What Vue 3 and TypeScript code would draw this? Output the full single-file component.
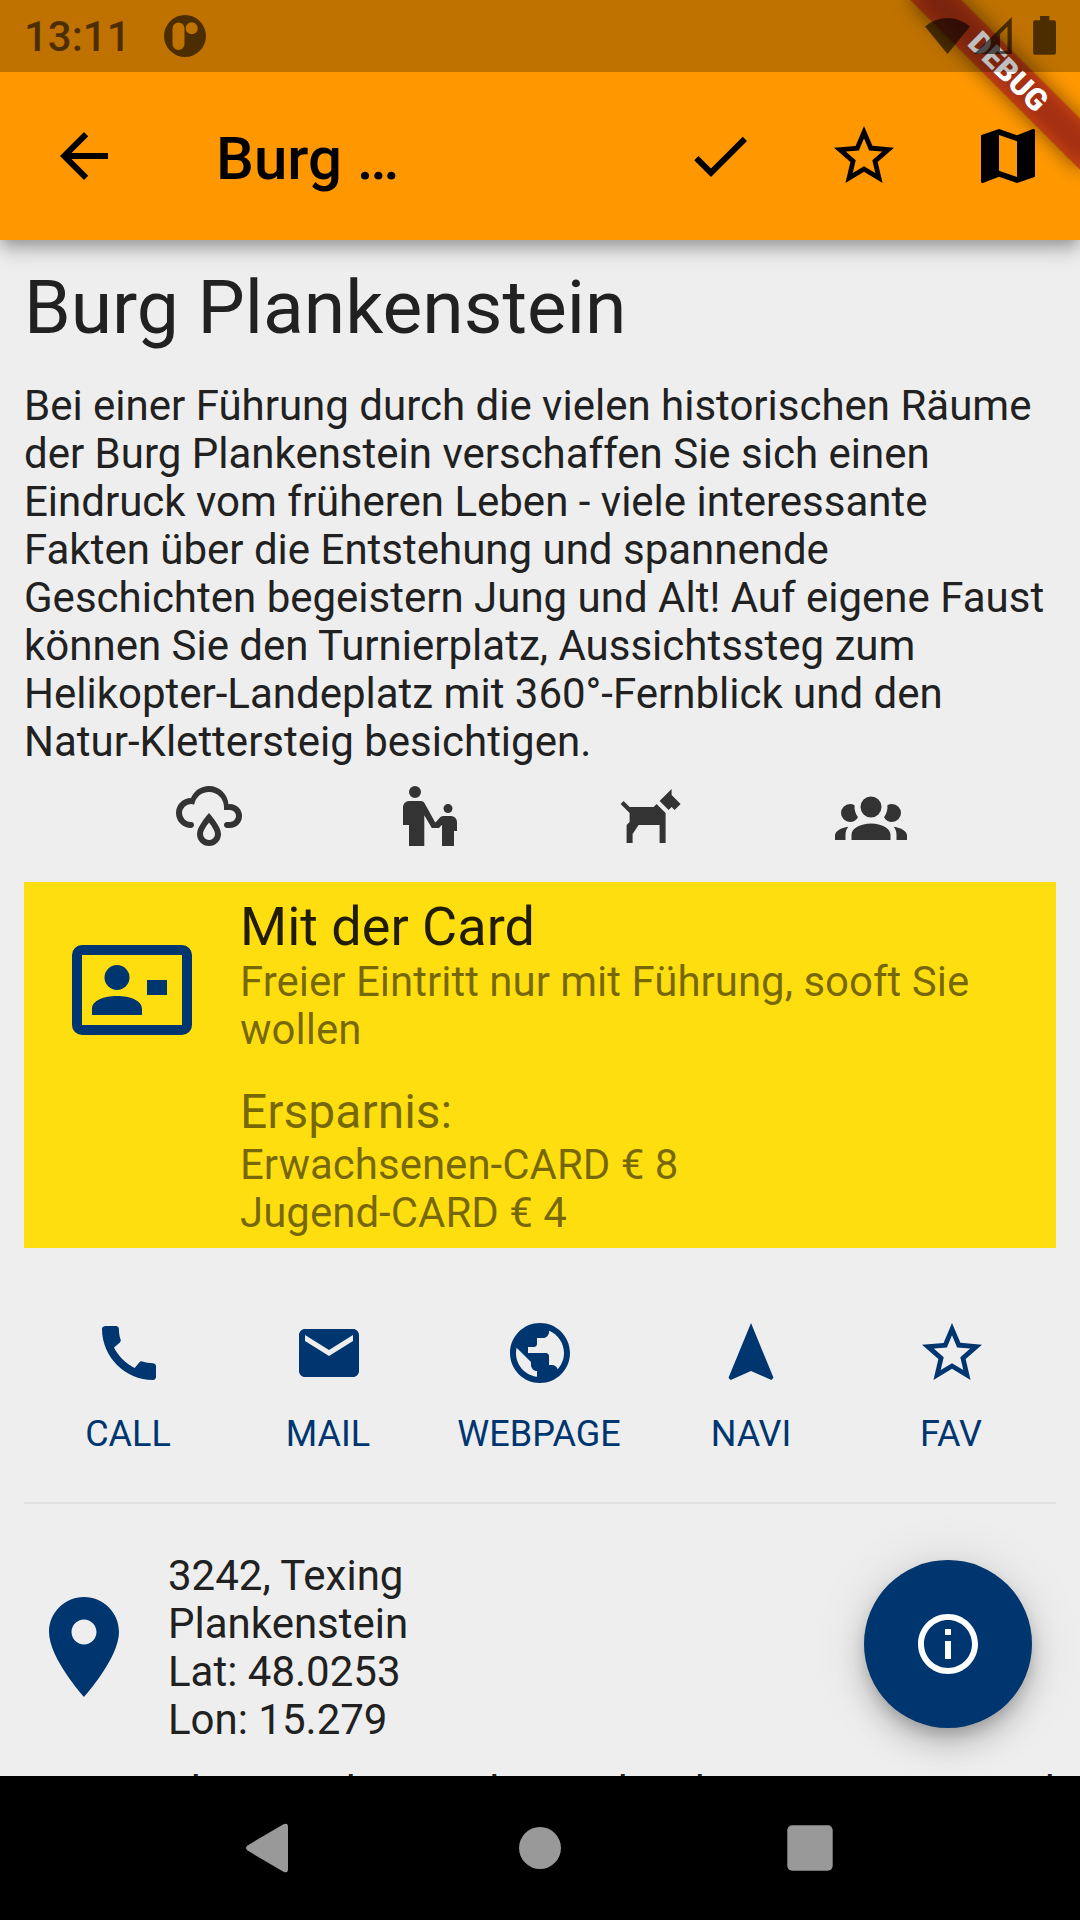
<script setup lang="ts">
interface Action {
  label: string
  path: string
  wide?: boolean
}

const starOutline =
  'M22 9.24l-7.19-.62L12 2 9.19 8.63 2 9.24l5.46 4.73L5.82 21 12 17.27 18.18 21l-1.63-7.03L22 9.24zM12 15.4l-3.76 2.27 1-4.28-3.32-2.88 4.38-.38L12 6.1l1.71 4.04 4.38.38-3.32 2.88 1 4.28L12 15.4z'

const toolbarIcons: string[] = [
  'M9 16.17L4.83 12l-1.42 1.41L9 19 21 7l-1.41-1.41z',
  starOutline,
  'M20.5 3l-.16.03L15 5.1 9 3 3.36 4.9c-.21.07-.36.25-.36.48V20.5c0 .28.22.5.5.5l.16-.03L9 18.9l6 2.1 5.64-1.9c.21-.07.36-.25.36-.48V3.5c0-.28-.22-.5-.5-.5zM15 19l-6-2.11V5l6 2.11V19z',
]

const description: string[] = [
  'Bei einer Führung durch die vielen historischen Räume',
  'der Burg Plankenstein verschaffen Sie sich einen',
  'Eindruck vom früheren Leben - viele interessante',
  'Fakten über die Entstehung und spannende',
  'Geschichten begeistern Jung und Alt! Auf eigene Faust',
  'können Sie den Turnierplatz, Aussichtssteg zum',
  'Helikopter-Landeplatz mit 360°-Fernblick und den',
  'Natur-Klettersteig besichtigen.',
]

const features: string[] = [
  // rain
  'M6,14.03A1,1 0 0,1 7,15.03C7,15.58 6.55,16.03 6,16.03C3.24,16.03 1,13.79 1,11.03C1,8.27 3.24,6.03 6,6.03C7,3.68 9.3,2.03 12,2.03C15.43,2.03 18.24,4.69 18.5,8.06L19,8.03A4,4 0 0,1 23,12.03C23,14.23 21.21,16.03 19,16.03H18C17.45,16.03 17,15.58 17,15.03C17,14.47 17.45,14.03 18,14.03H19A2,2 0 0,0 21,12.03A2,2 0 0,0 19,10.03H17V9.03C17,6.27 14.76,4.03 12,4.03C9.5,4.03 7.45,5.84 7.06,8.21C6.73,8.09 6.37,8.03 6,8.03A3,3 0 0,0 3,11.03A3,3 0 0,0 6,14.03M12,14.15C12.18,14.39 12.37,14.66 12.56,14.94C13,15.56 14,17.03 14,18C14,19.11 13.1,20 12,20A2,2 0 0,1 10,18C10,17.03 11,15.56 11.44,14.94C11.63,14.66 11.82,14.4 12,14.15M12,11.03L11.5,11.59C11.5,11.59 10.65,12.55 9.79,13.81C8.93,15.06 8,16.56 8,18A4,4 0 0,0 12,22A4,4 0 0,0 16,18C16,16.56 15.07,15.06 14.21,13.81C13.35,12.55 12.5,11.59 12.5,11.59Z',
  // parent with child
  'M7,2A2,2 0 0,1 9,4A2,2 0 0,1 7,6A2,2 0 0,1 5,4A2,2 0 0,1 7,2M18,8A1.5,1.5 0 0,1 19.5,9.5A1.5,1.5 0 0,1 18,11A1.5,1.5 0 0,1 16.5,9.5A1.5,1.5 0 0,1 18,8M5,7H9C9.5,7 9.9,7.25 10.15,7.65L13.7,14.05H13.9L15.1,12.75C15.5,12.3 16,12 16.5,12H19A2,2 0 0,1 21,14V17H20V22H16V14.9L15,16H12.6L10.1,11.75V22H5V15H3V9A2,2 0 0,1 5,7Z',
  // dog
  'M19.2,3L15.2,7L18.2,10L19.2,9L20.2,10L22.2,8L19.2,5ZM3.2,7L5.2,9H13.2L14.2,8L17.2,11V21H15.2V15H8.2L6.2,18V21H4.2V15L5.2,14V11L2.2,8Z',
  // group
  'M12,5.5A3.5,3.5 0 0,1 15.5,9A3.5,3.5 0 0,1 12,12.5A3.5,3.5 0 0,1 8.5,9A3.5,3.5 0 0,1 12,5.5M5,8C5.56,8 6.08,8.15 6.53,8.42C6.38,9.85 6.8,11.27 7.66,12.38C7.16,13.34 6.16,14 5,14A3,3 0 0,1 2,11A3,3 0 0,1 5,8M19,8A3,3 0 0,1 22,11A3,3 0 0,1 19,14C17.84,14 16.84,13.34 16.34,12.38C17.2,11.27 17.62,9.85 17.47,8.42C17.92,8.15 18.44,8 19,8M5.5,18.25C5.5,16.18 8.41,14.5 12,14.5C15.59,14.5 18.5,16.18 18.5,18.25V20H5.5V18.25M0,20V18.5C0,17.11 1.89,15.94 4.45,15.6C3.86,16.28 3.5,17.22 3.5,18.25V20H0M24,20H20.5V18.25C20.5,17.22 20.14,16.28 19.55,15.6C22.11,15.94 24,17.11 24,18.5V20Z',
]

const actions: Action[] = [
  {
    label: 'CALL',
    path: 'M20.01 15.38c-1.23 0-2.42-.2-3.53-.56-.35-.12-.74-.03-1.01.24l-1.57 1.97c-2.83-1.35-5.48-3.9-6.89-6.83l1.95-1.66c.27-.28.35-.67.24-1.02-.37-1.11-.56-2.3-.56-3.53 0-.54-.45-.99-.99-.99H4.19C3.65 3 3 3.24 3 3.99 3 13.28 10.73 21 20.01 21c.71 0 .99-.63.99-1.18v-3.45c0-.54-.45-.99-.99-.99z',
  },
  {
    label: 'MAIL',
    path: 'M20 4H4c-1.1 0-1.99.9-1.99 2L2 18c0 1.1.9 2 2 2h16c1.1 0 2-.9 2-2V6c0-1.1-.9-2-2-2zm0 4l-8 5-8-5V6l8 5 8-5v2z',
  },
  {
    label: 'WEBPAGE',
    wide: true,
    path: 'M12 2C6.48 2 2 6.48 2 12s4.48 10 10 10 10-4.48 10-10S17.52 2 12 2zm-1 17.93c-3.95-.49-7-3.85-7-7.93 0-.62.08-1.21.21-1.79L9 15v1c0 1.1.9 2 2 2v1.93zm6.9-2.54c-.26-.81-1-1.39-1.9-1.39h-1v-3c0-.55-.45-1-1-1H8v-2h2c.55 0 1-.45 1-1V7h2c1.1 0 2-.9 2-2v-.41c2.93 1.19 5 4.06 5 7.41 0 2.08-.8 3.97-2.1 5.39z',
  },
  { label: 'NAVI', path: 'M12 2L4.5 20.29l.71.71L12 18l6.79 3 .71-.71z' },
  { label: 'FAV', path: starOutline },
]

const address: string[] = ['3242, Texing', 'Plankenstein', 'Lat: 48.0253', 'Lon: 15.279']
</script>

<template>
  <div class="screen">
    <div class="status">
      <span class="clock">13:11</span>
      <svg class="notif" width="42" height="42" viewBox="0 0 42 42">
        <path
          fill-rule="evenodd"
          d="M21 0a21 21 0 1 1 0 42a21 21 0 1 1 0-42zM14.500 7.500a6 6 0 0 0-6 6v15.500a6 6 0 0 0 12 0v-15.500a6 6 0 0 0-6-6zM27.700 7.300a6 6 0 1 0 0 12a6 6 0 1 0 0-12z"
        />
      </svg>
      <svg class="signals" width="132" height="42" viewBox="924 15 132 42">
        <path d="M925 26.500a34 34 0 0 1 45 0L947.500 54z" />
        <path fill-rule="evenodd" d="M974 54L1011.800 17V54zM1000 51H1007.500V26.500L1000 34z" />
        <path d="M1040 16h9.400v4.300h4.400a2.200 2.200 0 0 1 2.200 2.200v30a2.200 2.200 0 0 1-2.200 2.200h-18.500a2.200 2.200 0 0 1-2.200-2.200v-30a2.200 2.200 0 0 1 2.200-2.200h4.700z" />
      </svg>
    </div>

    <div class="ribbon"><span>DEBUG</span></div>

    <header class="appbar">
      <svg class="ic" viewBox="0 0 24 24">
        <path d="M20 11H7.830l5.590-5.590L12 4l-8 8 8 8 1.410-1.410L7.830 13H20v-2z" />
      </svg>
      <h1>Burg …</h1>
      <div class="tools">
        <svg v-for="(p, i) in toolbarIcons" :key="i" class="ic" viewBox="0 0 24 24"><path :d="p" /></svg>
      </div>
    </header>

    <main class="content">
      <h2>Burg Plankenstein</h2>
      <p class="desc"><span v-for="line in description" :key="line">{{ line }}</span></p>

      <div class="features">
        <svg v-for="(p, i) in features" :key="i" class="ic" viewBox="0 0 24 24"><path :d="p" /></svg>
      </div>

      <section class="card">
        <svg class="big" viewBox="0 0 24 24">
          <path
            fill-rule="evenodd"
            d="M2 3H22A2 2 0 0 1 24 5V19A2 2 0 0 1 22 21H2A2 2 0 0 1 0 19V5A2 2 0 0 1 2 3ZM2 5V19H22V5Z"
          />
          <circle cx="9" cy="9.500" r="2.500" />
          <path d="M14 17H4V15.750C4 14.100 6.400 13.200 9 13.200S14 14.100 14 15.750ZM15 10H19V13H15Z" />
        </svg>
        <div class="card-text">
          <h3>Mit der Card</h3>
          <p>Freier Eintritt nur mit Führung, sooft Sie<br />wollen</p>
          <h4>Ersparnis:</h4>
          <p>Erwachsenen-CARD € 8<br />Jugend-CARD € 4</p>
        </div>
      </section>

      <nav class="actions">
        <div v-for="a in actions" :key="a.label" class="action" :class="{ wide: a.wide }">
          <svg class="ic" viewBox="0 0 24 24"><path :d="a.path" /></svg>
          <span>{{ a.label }}</span>
        </div>
      </nav>

      <hr />

      <div class="place">
        <svg class="big" viewBox="0 0 24 24">
          <path d="M12 2C8.130 2 5 5.130 5 9c0 5.250 7 13 7 13s7-7.750 7-13c0-3.870-3.130-7-7-7zm0 9.500c-1.380 0-2.500-1.120-2.500-2.500s1.120-2.500 2.500-2.500 2.500 1.120 2.500 2.500-1.120 2.500-2.500 2.500z" />
        </svg>
        <p><span v-for="line in address" :key="line">{{ line }}</span></p>
      </div>

      <p class="more">
        <span>kann</span><span>hier</span><span>bei</span><span>ha</span><span>bis zur</span><span>k</span>
      </p>
    </main>

    <button class="fab" aria-label="Info">
      <svg class="ic" viewBox="0 0 24 24">
        <path d="M11 7h2v2h-2zm0 4h2v6h-2zm1-9C6.480 2 2 6.480 2 12s4.480 10 10 10 10-4.480 10-10S17.520 2 12 2zm0 18c-4.410 0-8-3.590-8-8s3.590-8 8-8 8 3.590 8 8-3.590 8-8 8z" />
      </svg>
    </button>

    <footer class="navbar">
      <svg width="48" height="50" viewBox="3 0 48 50">
        <path d="M4.500 22.400L40.500 1.300Q45 -.5 45 4V46Q45 50.500 40.500 48.700L4.500 27.600Q1.500 25 4.500 22.400Z" />
      </svg>
      <svg width="48" height="48" viewBox="0 0 48 48"><circle cx="24" cy="24" r="21" /></svg>
      <svg width="48" height="48" viewBox="0 0 48 48"><rect x="1.300" y="1.300" width="45.400" height="45.400" rx="5" /></svg>
    </footer>
  </div>
</template>

<style>
body {
  margin: 0;
}
</style>

<style scoped>
.screen {
  position: relative;
  display: flex;
  flex-direction: column;
  width: 1080px;
  height: 1920px;
  overflow: hidden;
  background: #eee;
  color: #212121;
  font-family: Roboto, sans-serif;
  font-size: 42px;
  line-height: 48px;
}
h1,
h2,
h3,
h4,
p {
  margin: 0;
  font-weight: 400;
  white-space: nowrap;
}
svg {
  display: block;
  flex: none;
  fill: currentColor;
}
.ic {
  width: 72px;
  height: 72px;
}
.big {
  width: 120px;
  height: 120px;
  color: #003670;
}

/* translucent system bar lies over the app */
.status {
  position: absolute;
  z-index: 4;
  top: 0;
  left: 0;
  box-sizing: border-box;
  display: flex;
  align-items: center;
  width: 1080px;
  height: 72px;
  padding: 0 24px;
  background: rgba(0, 0, 0, 0.25);
}
.status svg {
  fill: rgba(0, 0, 0, 0.6);
}
.clock {
  width: 140px;
  padding-top: 2px;
  color: rgba(0, 0, 0, 0.6);
  font-weight: 500;
}
.signals {
  margin-left: auto;
}

.ribbon {
  position: absolute;
  z-index: 3;
  top: 84px;
  left: 960px;
  width: 240px;
  height: 36px;
  transform: rotate(45deg);
  transform-origin: 120px -84px;
  color: #fff;
  font-size: 30.6px;
  font-weight: 900;
  line-height: 36px;
  text-align: center;
}
.ribbon::before,
.ribbon::after {
  content: '';
  position: absolute;
  z-index: -1;
  inset: 0;
  background: rgba(0, 0, 0, 0.5);
  filter: blur(10px);
}
.ribbon::after {
  background: rgba(183, 28, 28, 0.627);
  filter: none;
}

.appbar {
  position: relative;
  z-index: 1;
  box-sizing: border-box;
  display: flex;
  align-items: center;
  height: 240px;
  padding: 72px 36px 0 48px;
  background: #ff9800;
  color: #000;
  box-shadow:
    0 6px 12px -3px rgba(0, 0, 0, 0.2),
    0 12px 15px rgba(0, 0, 0, 0.14),
    0 3px 30px rgba(0, 0, 0, 0.12);
}
.appbar h1 {
  margin: 6px 0 0 96px;
  font-size: 60px;
  font-weight: 500;
  line-height: 70px;
}
.tools {
  display: flex;
  gap: 72px;
  margin-left: auto;
}

.content {
  flex: none;
  box-sizing: border-box;
  height: 1536px;
  padding: 25px 24px 0;
  overflow: hidden;
}
.content h2 {
  font-size: 75px;
  line-height: 84px;
}
.desc {
  margin-top: 33px;
}
.desc span,
.place span {
  display: block;
}
.features {
  display: flex;
  justify-content: space-evenly;
  margin-top: 14px;
  color: #333;
}

.card {
  box-sizing: border-box;
  display: flex;
  gap: 48px;
  height: 366px;
  margin-top: 30px;
  padding: 13px 0 0 48px;
  background: #ffde10;
  color: rgba(0, 0, 0, 0.54);
}
.card .big {
  margin-top: 35px;
}
.card h3 {
  margin-bottom: -1px;
  color: rgba(0, 0, 0, 0.87);
  font-size: 54px;
  line-height: 64px;
}
.card h4 {
  margin: 30px 0 1px;
  font-size: 48px;
  line-height: 56px;
}

.actions {
  display: flex;
  justify-content: center;
  margin-top: 69px;
  color: #003670;
}
.action {
  display: flex;
  flex-direction: column;
  align-items: center;
  gap: 24px;
  width: 200px;
  font-size: 36px;
  line-height: 42px;
}
.action.wide {
  width: 222px;
}
.action:nth-child(-n + 3) span {
  margin-right: 2px;
}
.action:last-child svg {
  margin-left: 1px;
}
hr {
  height: 2px;
  margin: 47px 0 48px;
  border: 0;
  background: #e1e1e1;
}
.place {
  display: flex;
  align-items: center;
  gap: 24px;
}
.place .big {
  margin-bottom: 2px;
}
.more {
  display: grid;
  grid-template-columns: 155px 143.500px 128.500px 77px 350px 30px;
  margin: 24px 0 0 167px;
}

.fab {
  position: absolute;
  z-index: 2;
  top: 1560px;
  left: 864px;
  display: flex;
  align-items: center;
  justify-content: center;
  width: 168px;
  height: 168px;
  padding: 0;
  border: 0;
  border-radius: 50%;
  background: #003670;
  color: #fff;
  box-shadow:
    0 9px 15px -3px rgba(0, 0, 0, 0.2),
    0 18px 30px rgba(0, 0, 0, 0.14),
    0 3px 54px rgba(0, 0, 0, 0.12);
}

.navbar {
  position: relative;
  z-index: 2;
  display: flex;
  align-items: center;
  justify-content: center;
  gap: 222px;
  height: 144px;
  background: #000;
  color: #999;
}
</style>
